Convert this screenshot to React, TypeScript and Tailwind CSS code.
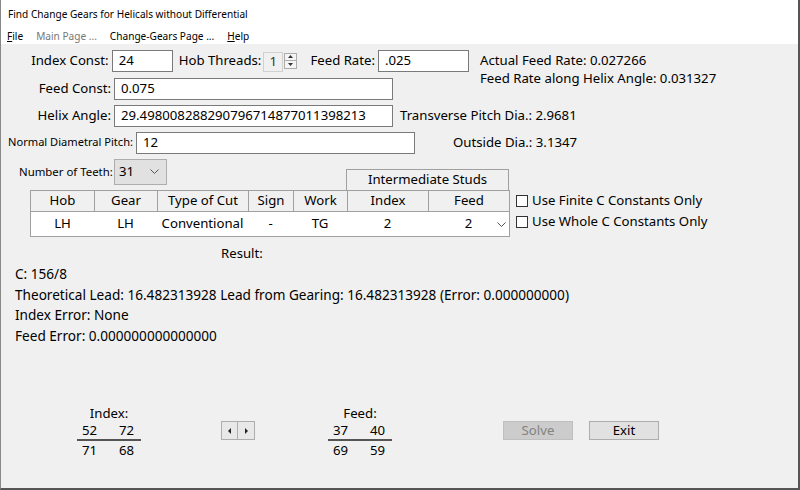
import React from "react";

const font = "font-['Noto_Sans',sans-serif]";

function Field({ w, value }: { w: string; value: string }) {
  return (
    <div
      className={`${w} shrink-0 h-[22px] bg-white border border-[#7a7a7a] pl-[6px] flex items-center text-[13.2px] leading-none overflow-hidden whitespace-nowrap`}
    >
      {value}
    </div>
  );
}

function Spin() {
  return (
    <div className="flex items-center h-[23px] ml-[2px] shrink-0">
      <div className="w-[20px] h-[20px] mt-[2px] border border-[#d0d0d0] bg-[#f0f0f0] flex items-center pl-[5px] text-[13.2px] text-[#333]">
        1
      </div>
      <div className="flex flex-col ml-[1px] border border-[#adadad] h-[16px] w-[13px]">
        <div className="flex-1 flex items-center justify-center bg-[#f4f4f4] border-b border-[#adadad]">
          <svg width="5" height="3" viewBox="0 0 5 3"><path d="M0 3 L2.5 0 L5 3 Z" fill="#333" /></svg>
        </div>
        <div className="flex-1 flex items-center justify-center bg-[#f4f4f4]">
          <svg width="5" height="3" viewBox="0 0 5 3"><path d="M0 0 L2.5 3 L5 0 Z" fill="#333" /></svg>
        </div>
      </div>
    </div>
  );
}

function Chevron() {
  return (
    <svg width="9" height="6" viewBox="0 0 9 6">
      <path d="M0.5 0.5 L4.5 4.5 L8.5 0.5" stroke="#555" strokeWidth="1" fill="none" />
    </svg>
  );
}

function Check({ label }: { label: string }) {
  return (
    <div className="flex items-center h-[21px] whitespace-nowrap">
      <div className="w-[12px] h-[12px] border border-[#333] bg-white" />
      <span className="ml-[4px] text-[13.2px]">{label}</span>
    </div>
  );
}

function Fraction({ title, top, bottom }: { title: string; top: string[]; bottom: string[] }) {
  return (
    <div className="flex flex-col items-center w-[64px] text-[13.2px] leading-[18px]">
      <div>{title}</div>
      <div className="flex w-full justify-between pl-[5px] pr-[7px] -mt-[1px]">
        <span>{top[0]}</span>
        <span>{top[1]}</span>
      </div>
      <div className="w-full h-[2px] bg-[#555]" />
      <div className="flex w-full justify-between pl-[5px] pr-[7px]">
        <span>{bottom[0]}</span>
        <span>{bottom[1]}</span>
      </div>
    </div>
  );
}

export default function App() {
  const head = ["Hob", "Gear", "Type of Cut", "Sign", "Work", "Index", "Feed"];
  const widths = ["w-[63px]", "w-[63px]", "w-[91px]", "w-[45px]", "w-[54px]", "w-[81px]", "w-[81px]"];
  const row = ["LH", "LH", "Conventional", "-", "TG", "2", "2"];

  return (
    <div className={`w-[800px] h-[490px] bg-[#f0f0f0] border-l border-r-2 border-b-2 border-l-[#888] border-r-[#555] border-b-[#555] text-black ${font} overflow-hidden whitespace-nowrap`}>
      {/* title + menu */}
      <div className="bg-white h-[44px]">
        <div className="h-[29px] flex items-center pl-[7px] text-[10.1px]">
          Find Change Gears for Helicals without Differential
        </div>
        <div className="h-[15px] flex items-center text-[10.1px] pl-[6px]">
          <span><span className="underline">F</span>ile</span>
          <span className="ml-[13px] text-[#777]">Main Page ...</span>
          <span className="ml-[13px]">Change-Gears Page ...</span>
          <span className="ml-[13px]"><span className="underline">H</span>elp</span>
        </div>
      </div>

      {/* top rows */}
      <div className="flex mt-[5px]">
        <div className="flex flex-col gap-[5px] w-[468px]">
          <div className="flex items-center h-[23px]">
            <span className="w-[110px] text-right text-[13.2px]">Index Const:</span>
            <Field w="w-[61px] ml-[3px]" value="24" />
            <span className="ml-[6px] text-[13.2px]">Hob Threads:</span>
            <Spin />
            <span className="ml-[13px] text-[13.2px]">Feed Rate:</span>
            <Field w="w-[91px] ml-[3px]" value=".025" />
          </div>
          <div className="flex items-center h-[23px]">
            <span className="w-[110px] text-right text-[13.2px]">Feed Const:</span>
            <Field w="w-[279px] ml-[3px]" value="0.075" />
          </div>
        </div>
        <div className="flex flex-col pl-[11px] text-[13.2px] leading-[18px] pt-[2px]">
          <span>Actual Feed Rate: 0.027266</span>
          <span>Feed Rate along Helix Angle: 0.031327</span>
        </div>
      </div>

      <div className="flex items-center h-[23px] mt-[4px]">
        <span className="w-[110px] text-right text-[13.2px]">Helix Angle:</span>
        <Field w="w-[279px] ml-[3px]" value="29.498008288290796714877011398213" />
        <span className="ml-[7px] text-[13.2px]">Transverse Pitch Dia.: 2.9681</span>
      </div>

      <div className="flex items-center h-[23px] mt-[4px]">
        <span className="w-[132px] text-right text-[11.1px]">Normal Diametral Pitch:</span>
        <Field w="w-[279px] ml-[3px]" value="12" />
        <span className="ml-[38px] text-[13.2px]">Outside Dia.: 3.1347</span>
      </div>

      {/* teeth + intermediate studs header */}
      <div className="flex items-end mt-[5px]">
        <div className="w-[345px] flex items-center pl-[18px] mb-[5px]">
          <span className="w-[92px] text-[11.4px]">Number of Teeth:</span>
          <div className="ml-[3px] w-[53px] h-[26px] bg-[#e1e1e1] border border-[#adadad] flex items-center justify-between pl-[4px] pr-[7px] text-[13.2px]">
            <span>31</span>
            <Chevron />
          </div>
        </div>
        <div className="w-[163px] h-[21px] border border-b-0 border-[#a0a0a0] flex items-center justify-center text-[13.2px]">
          Intermediate Studs
        </div>
      </div>

      {/* table + checkboxes */}
      <div className="flex items-start">
        <div className="ml-[29px] border border-[#a0a0a0] flex flex-col">
          <div className="flex h-[20px]">
            {head.map((h, i) => (
              <div
                key={h}
                className={`${widths[i]} ${i > 0 ? "border-l border-[#a0a0a0]" : ""} flex items-center justify-center text-[13.2px]`}
              >
                {h}
              </div>
            ))}
          </div>
          <div className="flex h-[25px] bg-white border-t border-[#a0a0a0]">
            {row.map((c, i) => (
              <div key={i} className={`${widths[i]} flex items-center justify-center text-[13.2px] relative`}>
                {c}
                {i === 6 && (
                  <span className="absolute right-[3px] top-[10px] flex">
                    <Chevron />
                  </span>
                )}
              </div>
            ))}
          </div>
        </div>
        <div className="ml-[6px] flex flex-col">
          <Check label="Use Finite C Constants Only" />
          <Check label="Use Whole C Constants Only" />
        </div>
      </div>

      {/* result */}
      <div className="pl-[220px] mt-[6px] text-[13.2px] leading-[20px]">Result:</div>
      <div className="pl-[14px] mt-[1px] text-[13.6px] leading-[20.5px]">
        <div>C: 156/8</div>
        <div>Theoretical Lead: 16.482313928 Lead from Gearing: 16.482313928 (Error: 0.000000000)</div>
        <div>Index Error: None</div>
        <div>Feed Error: 0.000000000000000</div>
      </div>

      {/* bottom */}
      <div className="flex items-start mt-[58px]">
        <div className="ml-[76px]">
          <Fraction title="Index:" top={["52", "72"]} bottom={["71", "68"]} />
        </div>
        <div className="ml-[80px] mt-[17px] flex">
          <div className="w-[17px] h-[19px] bg-[#e8e8e8] border border-[#adadad] flex items-center justify-center">
            <svg width="3" height="6" viewBox="0 0 3 6"><path d="M3 0 L0 3 L3 6 Z" fill="#222" /></svg>
          </div>
          <div className="w-[17px] h-[19px] bg-[#e8e8e8] border border-l-0 border-[#adadad] flex items-center justify-center">
            <svg width="3" height="6" viewBox="0 0 3 6"><path d="M0 0 L3 3 L0 6 Z" fill="#222" /></svg>
          </div>
        </div>
        <div className="ml-[73px]">
          <Fraction title="Feed:" top={["37", "40"]} bottom={["69", "59"]} />
        </div>
        <div className="ml-[111px] mt-[17px] flex gap-[16px]">
          <div className="w-[70px] h-[19px] bg-[#cccccc] border border-[#bfbfbf] flex items-center justify-center text-[13.2px] text-[#838383]">
            Solve
          </div>
          <div className="w-[70px] h-[19px] bg-[#e1e1e1] border border-[#adadad] flex items-center justify-center text-[13.2px]">
            Exit
          </div>
        </div>
      </div>
    </div>
  );
}
